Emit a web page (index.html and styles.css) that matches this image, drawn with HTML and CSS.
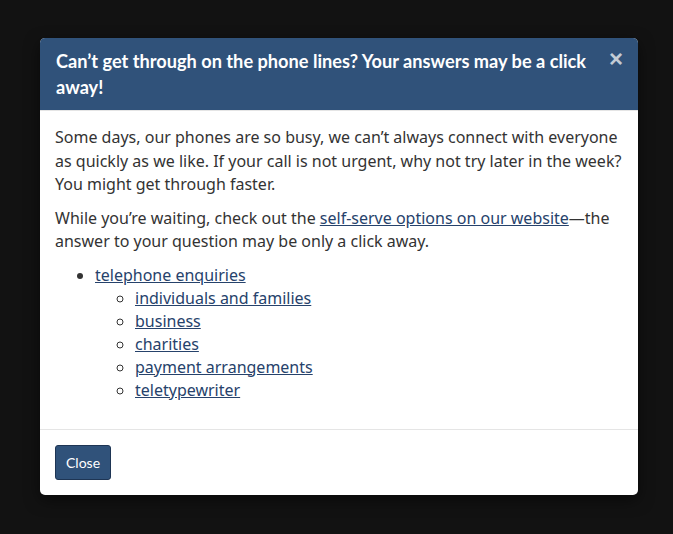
FILE: index.html
```html
<!DOCTYPE html>
<html lang="en">
<head>
<meta charset="utf-8">
<title>Modal</title>
<link rel="stylesheet" href="styles.css">
</head>
<body>
<div class="backdrop">
  <div class="modal">
    <div class="modal-header">
      <h2 class="modal-title">Can’t get through on the phone lines? Your answers may be a click away!</h2>
      <button class="close" type="button" aria-label="Close">×</button>
    </div>
    <div class="modal-body">
      <p>Some days, our phones are so busy, we can’t always connect with everyone as quickly as we like. If your call is not urgent, why not try later in the week? You might get through faster.</p>
      <p>While you’re waiting, check out the <a href="#">self-serve options on our website</a>—the answer to your question may be only a click away.</p>
      <ul class="list">
        <li><a href="#">telephone enquiries</a>
          <ul class="sublist">
            <li><a href="#">individuals and families</a></li>
            <li><a href="#">business</a></li>
            <li><a href="#">charities</a></li>
            <li><a href="#">payment arrangements</a></li>
            <li><a href="#">teletypewriter</a></li>
          </ul>
        </li>
      </ul>
    </div>
    <div class="modal-footer">
      <button class="btn" type="button">Close</button>
    </div>
  </div>
</div>
</body>
</html>
```
FILE: styles.css
```css
html, body {
  margin: 0;
  padding: 0;
  background: #121212;
}
.backdrop {
  width: 673px;
  height: 534px;
  padding-top: 38px;
  box-sizing: border-box;
  display: flex;
  justify-content: flex-start;
  align-items: flex-start;
  padding-left: 40px;
}
.modal {
  width: 598px;
  background: #fff;
  border-radius: 5px;
  overflow: hidden;
  box-shadow: 0 5px 15px rgba(0,0,0,0.5);
  font-family: "Noto Sans", sans-serif;
  color: #333;
}
.modal-header {
  background: #30527a;
  display: flex;
  align-items: flex-start;
  padding: 10px 16px 10px 16px;
  border-bottom: 1px solid #e5e5e5;
}
.modal-title {
  margin: 0;
  flex: 1;
  font-family: Lato, sans-serif;
  font-weight: 700;
  font-size: 18.2px;
  line-height: 26px;
  color: #fff;
}
.close {
  background: none;
  border: 0;
  padding: 0;
  margin: 0 -1px 0 10px;
  font-family: "Liberation Sans", sans-serif;
  font-weight: 700;
  font-size: 24px;
  line-height: 22px;
  color: #c3cbd5;
  cursor: pointer;
}
.modal-body {
  padding: 15px 15px 27px 15px;
  font-size: 16px;
  line-height: 23.5px;
}
.modal-body p {
  margin: 0 0 10px 0;
}
a {
  color: #26426b;
  text-decoration: underline;
}
.list {
  margin: 0;
  padding-left: 40px;
  line-height: 23px;
  list-style: disc;
}
.sublist {
  margin: 0;
  padding-left: 40px;
  list-style: circle;
}
.modal-footer {
  border-top: 1px solid #e5e5e5;
  padding: 15px;
  display: flex;
}
.btn {
  background: #30527a;
  color: #fff;
  border: 1px solid #1e3554;
  border-radius: 3px;
  font-family: Lato, sans-serif;
  font-size: 14px;
  padding: 0 10px;
  height: 35px;
  cursor: pointer;
}
```
